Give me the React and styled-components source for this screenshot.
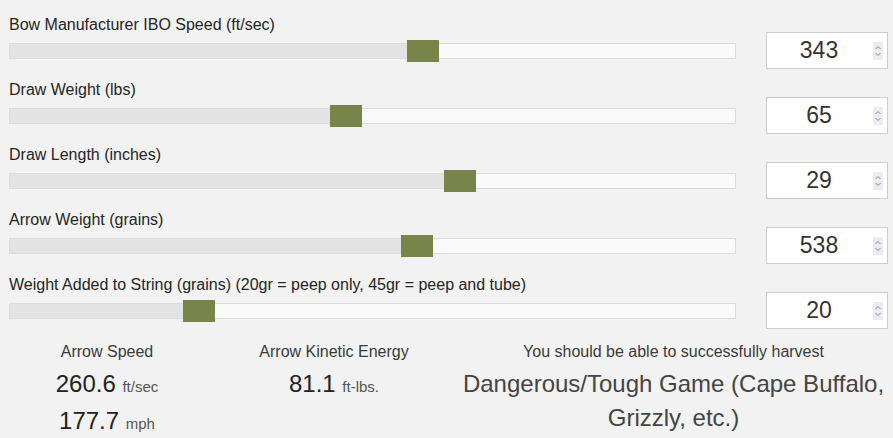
import React from 'react';
import styled, { createGlobalStyle } from 'styled-components';

const GlobalStyle = createGlobalStyle`
  html, body {
    margin: 0;
    padding: 0;
    background: #f2f2f2;
    overflow: hidden;
  }
  body {
    font-family: "Liberation Sans", Arial, sans-serif;
    color: #222;
  }
`;

const Page = styled.div`
  width: 893px;
  padding-top: 17px;
  box-sizing: border-box;
`;

const Row = styled.div`
  display: grid;
  grid-template-columns: 727px 122px;
  grid-template-rows: 15px 37px;
  column-gap: 30px;
  padding: 0 5px 0 9px;
  margin-bottom: 13px;
`;

const Label = styled.div`
  grid-column: 1;
  grid-row: 1;
  font-size: 16px;
  line-height: 15px;
  color: #252525;
  white-space: nowrap;
`;

const SliderArea = styled.div`
  grid-column: 1;
  grid-row: 2;
  display: flex;
  align-items: center;
`;

const Track = styled.div`
  position: relative;
  width: 100%;
  height: 16px;
  box-sizing: border-box;
  border: 1px solid #dcdcdc;
  background: #fafafa;
`;

const Fill = styled.div`
  height: 100%;
  background: #e3e3e3;
`;

const Thumb = styled.div`
  position: absolute;
  top: -4px;
  width: 32px;
  height: 22px;
  background: #79844a;
`;

const InputBox = styled.div`
  grid-column: 2;
  grid-row: 2;
  display: flex;
  align-items: center;
  box-sizing: border-box;
  height: 37px;
  border: 1px solid #cccccc;
  background: #fff;
  padding-right: 4px;
`;

const InputValue = styled.span`
  flex: 1;
  text-align: center;
  font-size: 23px;
  color: #333;
  padding-right: 2px;
`;

const Spinner = styled.div`
  width: 10px;
  height: 18px;
  background: #ebebf0;
  display: flex;
  align-items: center;
  justify-content: center;
`;

const Results = styled.div`
  display: grid;
  grid-template-columns: 214px 240px 1fr;
  margin-top: 10px;
  text-align: center;
`;

const ResultCol = styled.div`
  display: flex;
  flex-direction: column;
  align-items: center;
`;

const ResultLabel = styled.div`
  font-size: 16px;
  line-height: 20px;
  color: #3a3a3a;
  margin-bottom: 5px;
  white-space: nowrap;
`;

const ResultValue = styled.div`
  font-size: 24px;
  line-height: 34px;
  color: ${(p) => (p.$muted ? '#444' : '#222')};
  white-space: nowrap;
`;

const Unit = styled.span`
  font-size: 15px;
  color: #555;
`;

const sliders = [
  { label: 'Bow Manufacturer IBO Speed (ft/sec)', value: 343, pct: 0.573 },
  { label: 'Draw Weight (lbs)', value: 65, pct: 0.462 },
  { label: 'Draw Length (inches)', value: 29, pct: 0.626 },
  { label: 'Arrow Weight (grains)', value: 538, pct: 0.564 },
  {
    label:
      'Weight Added to String (grains) (20gr = peep only, 45gr = peep and tube)',
    value: 20,
    pct: 0.25,
  },
];

const SpinIcon = () => (
  <svg width="8" height="14" viewBox="0 0 8 14">
    <path d="M1.5 5 L4 2.5 L6.5 5" fill="none" stroke="#8a8a8a" strokeWidth="1" />
    <path d="M1.5 9 L4 11.5 L6.5 9" fill="none" stroke="#8a8a8a" strokeWidth="1" />
  </svg>
);

const SliderRow = ({ label, value, pct }) => (
  <Row>
    <Label>{label}</Label>
    <SliderArea>
      <Track>
        <Fill style={{ width: `calc((100% - 32px) * ${pct} + 16px)` }} />
        <Thumb style={{ left: `calc((100% - 32px) * ${pct})` }} />
      </Track>
    </SliderArea>
    <InputBox>
      <InputValue>{value}</InputValue>
      <Spinner>
        <SpinIcon />
      </Spinner>
    </InputBox>
  </Row>
);

const App = () => (
  <Page>
    <GlobalStyle />
    {sliders.map((s) => (
      <SliderRow key={s.label} {...s} />
    ))}
    <Results>
      <ResultCol>
        <ResultLabel>Arrow Speed</ResultLabel>
        <ResultValue>
          260.6 <Unit>ft/sec</Unit>
        </ResultValue>
        <ResultValue>
          177.7 <Unit>mph</Unit>
        </ResultValue>
      </ResultCol>
      <ResultCol>
        <ResultLabel>Arrow Kinetic Energy</ResultLabel>
        <ResultValue>
          81.1 <Unit>ft-lbs.</Unit>
        </ResultValue>
      </ResultCol>
      <ResultCol>
        <ResultLabel>You should be able to successfully harvest</ResultLabel>
        <ResultValue $muted>
          Dangerous/Tough Game (Cape Buffalo,
          <br />
          Grizzly, etc.)
        </ResultValue>
      </ResultCol>
    </Results>
  </Page>
);

export default App;
